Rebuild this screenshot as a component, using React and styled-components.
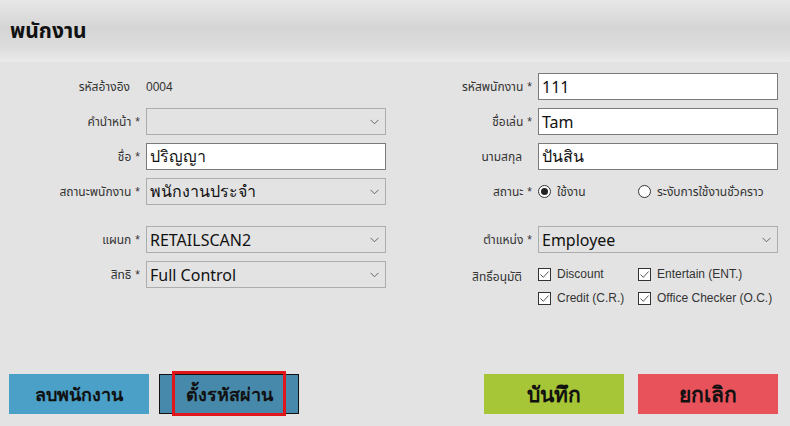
import React from "react";
import styled, { createGlobalStyle } from "styled-components";

const Global = createGlobalStyle`
  html, body { margin: 0; padding: 0; background: #e3e3e3; }
  body { font-family: Tahoma, "Liberation Sans", "Noto Sans Thai", sans-serif; color: #222; }
  #root { height: 100vh; }
`;

const Page = styled.div`
  height: 426px;
  display: flex;
  flex-direction: column;
  background: #e3e3e3;
`;

const Header = styled.header`
  height: 62px;
  display: flex;
  align-items: center;
  padding: 0 0 0 10px;
  box-sizing: border-box;
  background: linear-gradient(to bottom, #e7e7e7 0%, #d5d5d5 45%, #dcdcdc 75%, #ebebeb 100%);
`;

const Title = styled.h1`
  margin: 0;
  font-size: 21px;
  font-weight: bold;
  color: #111;
  padding-top: 1px;
`;

const Form = styled.div`
  flex: 1;
  display: grid;
  grid-template-columns: 140px 240px 140px 240px;
  grid-template-rows: 27px 27px 27px 27px 5px 27px 27px;
  column-gap: 6px;
  row-gap: 8px;
  padding-top: 11px;
  align-content: start;
`;

const Label = styled.div`
  font-size: 12px;
  color: #333;
  display: flex;
  align-items: ${(p) => (p.$top ? "flex-start" : "center")};
  justify-content: flex-end;
  padding-top: ${(p) => (p.$top ? "7px" : "0")};
  padding-right: ${(p) => (p.$pad ? "10px" : "0")};
  white-space: nowrap;
`;

const Star = styled.span`
  margin-left: 4px;
`;

const StaticValue = styled.div`
  font-size: 12px;
  color: #333;
  display: flex;
  align-items: center;
`;

const Input = styled.div`
  box-sizing: border-box;
  height: 27px;
  border: 1px solid #7a7a7a;
  background: #fff;
  display: flex;
  align-items: center;
  padding-left: 3px;
  font-family: "Segoe UI", "Noto Sans", Tahoma, sans-serif;
  font-size: 16px;
  color: #111;
`;

const Select = styled(Input)`
  border-color: #adadad;
  background: #e3e3e3;
  justify-content: space-between;
  padding-right: 6px;
`;

const Chevron = () => (
  <svg width="9" height="6" viewBox="0 0 9 6">
    <path d="M0.5 0.8 L4.5 4.8 L8.5 0.8" fill="none" stroke="#666" strokeWidth="1" />
  </svg>
);

const ChoiceRow = styled.div`
  display: flex;
  align-items: center;
  font-size: 12px;
  color: #333;
`;

const Choice = styled.label`
  display: flex;
  align-items: center;
  gap: 6px;
  width: ${(p) => p.$w || "auto"};
  white-space: nowrap;
  font-family: ${(p) => (p.$latin ? '"Liberation Sans", Tahoma, sans-serif' : "inherit")};
`;

const RadioDot = styled.span`
  box-sizing: border-box;
  width: 13px;
  height: 13px;
  border-radius: 50%;
  border: 1px solid #333;
  background: #fff;
  display: flex;
  align-items: center;
  justify-content: center;
  &::after {
    content: "";
    width: 7px;
    height: 7px;
    border-radius: 50%;
    background: ${(p) => (p.$on ? "#222" : "transparent")};
  }
`;

const CheckBox = styled.span`
  box-sizing: border-box;
  width: 13px;
  height: 13px;
  border: 1px solid #333;
  background: #fff;
  display: flex;
  align-items: center;
  justify-content: center;
`;

const CheckGrid = styled.div`
  grid-row: span 2;
  display: grid;
  grid-template-columns: 100px 140px;
  row-gap: 10px;
  padding-top: 6px;
  align-content: start;
  font-size: 12px;
  color: #333;
`;

const Tick = () => (
  <svg width="11" height="11" viewBox="0 0 11 11">
    <path d="M1.5 5.5 L4.3 8.3 L9.6 2.5" fill="none" stroke="#555" strokeWidth="1" />
  </svg>
);

const Footer = styled.div`
  display: flex;
  justify-content: space-between;
  padding: 0 12px 12px 9px;
`;

const Group = styled.div`
  display: flex;
  gap: ${(p) => p.$gap}px;
`;

const Button = styled.button`
  position: relative;
  box-sizing: border-box;
  width: 140px;
  height: 40px;
  border: ${(p) => (p.$outlined ? "1px solid #111" : "none")};
  background: ${(p) => p.$bg};
  font-family: Tahoma, "Liberation Sans", sans-serif;
  font-weight: bold;
  font-size: ${(p) => p.$fs || 18}px;
  color: #111;
  padding: 0;
  cursor: pointer;
`;

const Highlight = styled.span`
  position: absolute;
  left: 12px;
  top: -4px;
  width: 114px;
  height: 45px;
  box-sizing: border-box;
  border: 3px solid #e0161b;
  pointer-events: none;
`;

export default function App() {
  return (
    <Page>
      <Global />
      <Header>
        <Title>พนักงาน</Title>
      </Header>
      <Form>
        <Label $pad>รหัสอ้างอิง</Label>
        <StaticValue>0004</StaticValue>
        <Label>รหัสพนักงาน<Star>*</Star></Label>
        <Input>111</Input>

        <Label>คำนำหน้า<Star>*</Star></Label>
        <Select><span /><Chevron /></Select>
        <Label>ชื่อเล่น<Star>*</Star></Label>
        <Input>Tam</Input>

        <Label>ชื่อ<Star>*</Star></Label>
        <Input>ปริญญา</Input>
        <Label $pad>นามสกุล</Label>
        <Input>ปันสิน</Input>

        <Label>สถานะพนักงาน<Star>*</Star></Label>
        <Select><span>พนักงานประจำ</span><Chevron /></Select>
        <Label>สถานะ<Star>*</Star></Label>
        <ChoiceRow>
          <Choice $w="100px"><RadioDot $on />ใช้งาน</Choice>
          <Choice><RadioDot />ระงับการใช้งานชั่วคราว</Choice>
        </ChoiceRow>

        <div /><div /><div /><div />

        <Label>แผนก<Star>*</Star></Label>
        <Select><span>RETAILSCAN2</span><Chevron /></Select>
        <Label>ตำแหน่ง<Star>*</Star></Label>
        <Select><span>Employee</span><Chevron /></Select>

        <Label>สิทธิ<Star>*</Star></Label>
        <Select><span>Full Control</span><Chevron /></Select>
        <Label $top $pad>สิทธิ์อนุมัติ</Label>
        <CheckGrid>
          <Choice $latin><CheckBox><Tick /></CheckBox>Discount</Choice>
          <Choice $latin><CheckBox><Tick /></CheckBox>Entertain (ENT.)</Choice>
          <Choice $latin><CheckBox><Tick /></CheckBox>Credit (C.R.)</Choice>
          <Choice $latin><CheckBox><Tick /></CheckBox>Office Checker (O.C.)</Choice>
        </CheckGrid>
      </Form>
      <Footer>
        <Group $gap={10}>
          <Button $bg="#4aa0c6">ลบพนักงาน</Button>
          <Button $bg="#4689ab" $outlined>
            ตั้งรหัสผ่าน
            <Highlight />
          </Button>
        </Group>
        <Group $gap={14}>
          <Button $bg="#a6c537" $fs={21}>บันทึก</Button>
          <Button $bg="#e8525a" $fs={21}>ยกเลิก</Button>
        </Group>
      </Footer>
    </Page>
  );
}
